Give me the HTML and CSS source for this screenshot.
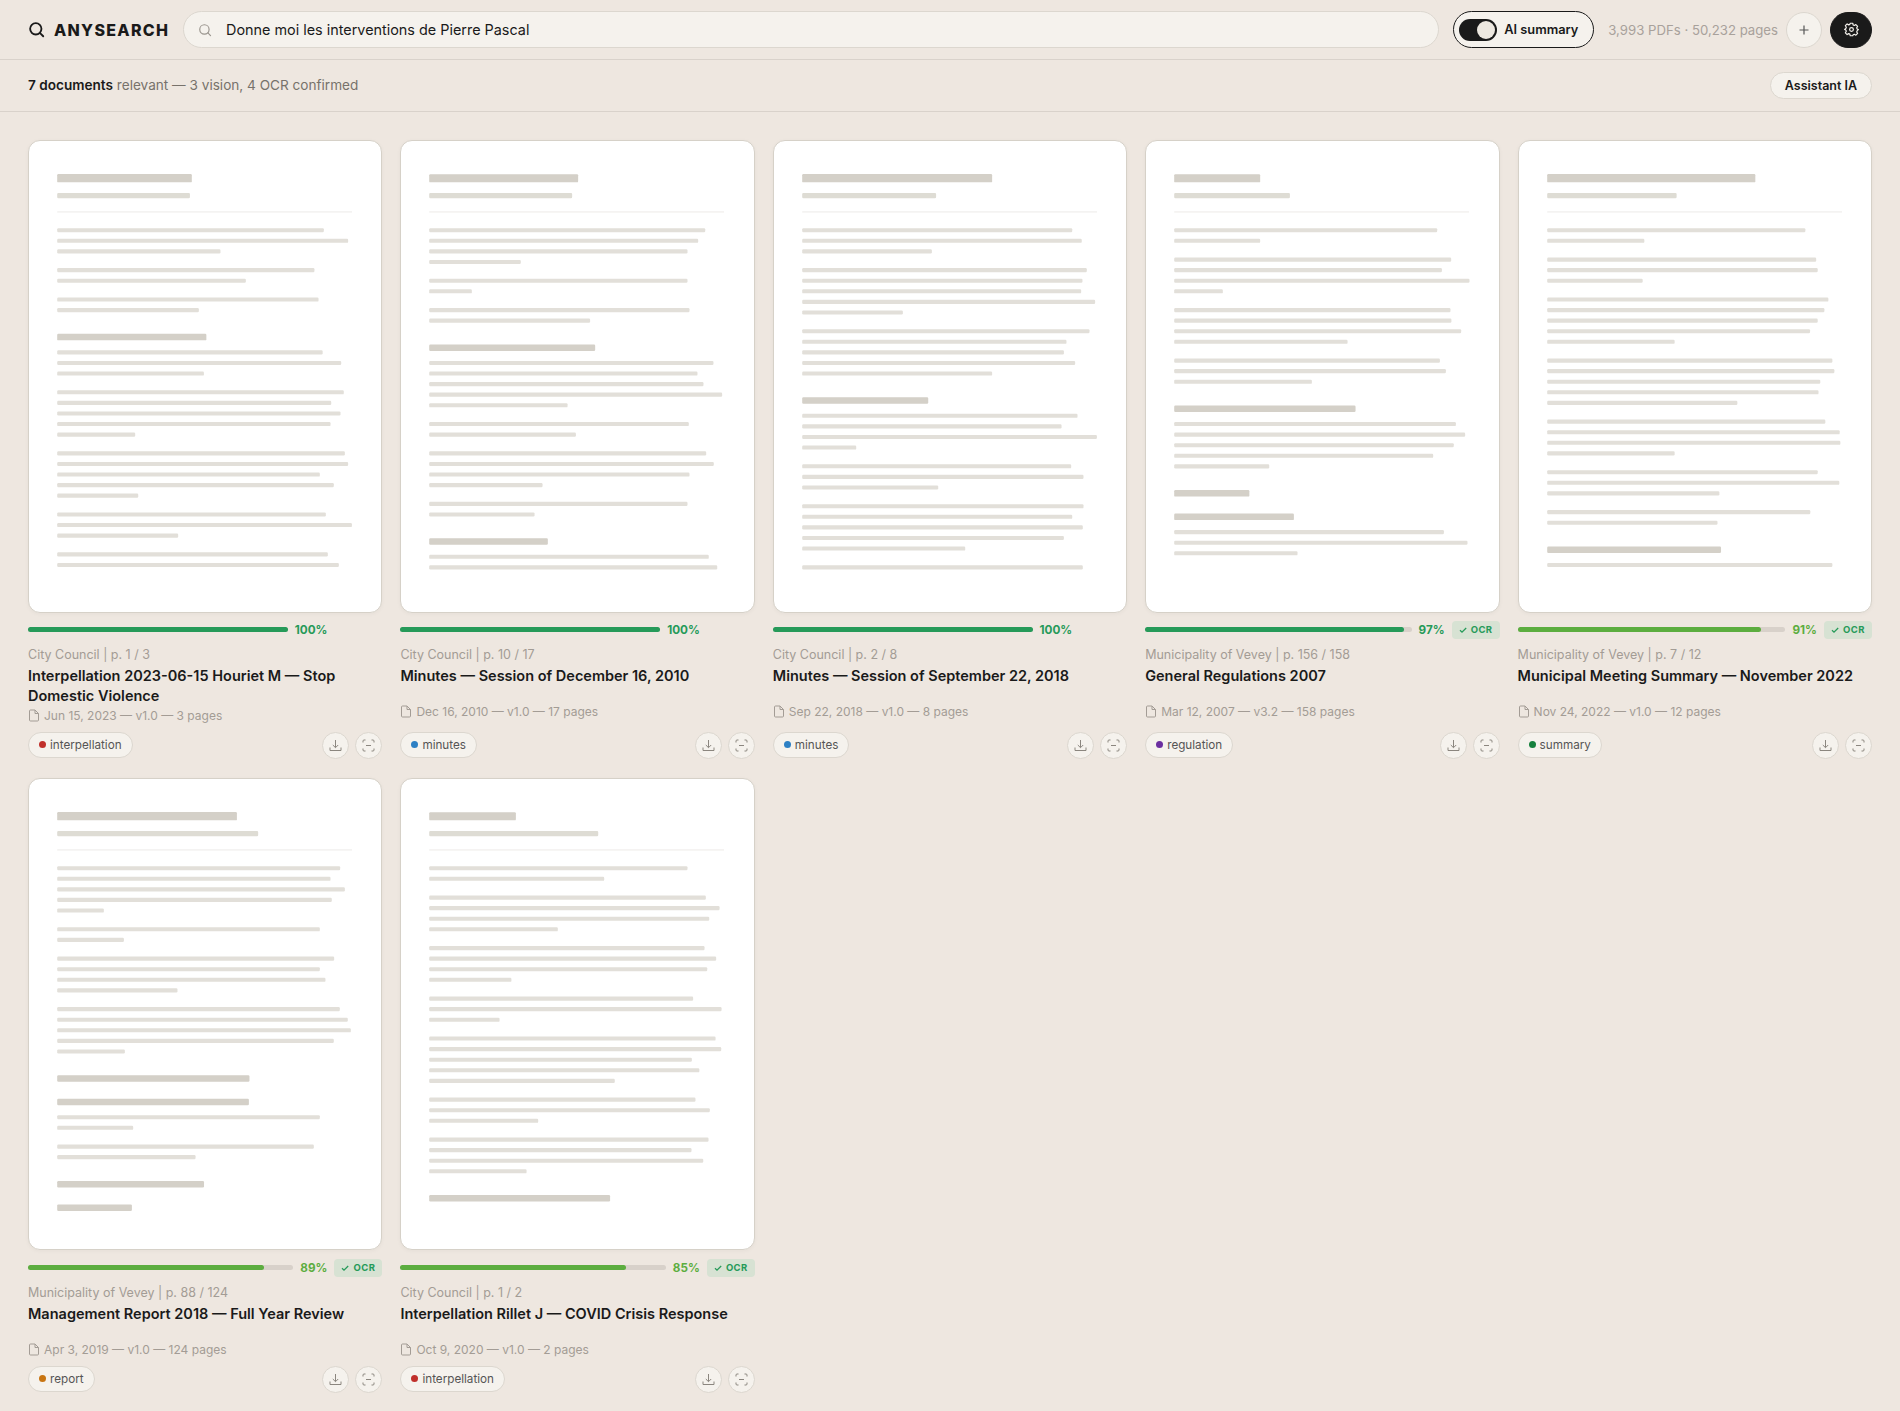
FILE: index.html
```html
<!DOCTYPE html>
<html lang="fr">
<head>
    <meta charset="UTF-8">
    <meta name="viewport" content="width=device-width, initial-scale=1.0">
    <title>AnySearch</title>
    <link rel="stylesheet" href="styles.css">
</head>
<body>

    <!-- Top bar -->
    <header class="topbar">
        <div class="logo">
            <svg width="17" height="17" viewBox="0 0 24 24" fill="none" stroke="currentColor" stroke-width="2.6" stroke-linecap="round"><circle cx="11" cy="11" r="8"/><path d="M17 17l4.5 4.5"/></svg>
            <span class="logo-text">ANYSEARCH</span>
        </div>
        <div class="search">
            <svg width="14" height="14" viewBox="0 0 24 24" fill="none" stroke="currentColor" stroke-width="2" stroke-linecap="round"><circle cx="11" cy="11" r="8"/><path d="M17 17l4.5 4.5"/></svg>
            <input type="text" class="search-input" value="Donne moi les interventions de Pierre Pascal">
        </div>
        <button type="button" class="ai-toggle"><span class="switch"></span>AI summary</button>
        <div class="topbar-end">
            <span class="stats">3,993 PDFs · 50,232 pages</span>
            <button type="button" class="add-btn">
                <svg width="12" height="12" viewBox="0 0 12 12" fill="none" stroke="currentColor" stroke-width="1.2"><path d="M6 1.5v9M1.5 6h9"/></svg>
            </button>
            <button type="button" class="settings-btn">
                <svg width="15" height="15" viewBox="0 0 24 24" fill="none" stroke="currentColor" stroke-width="1.9" stroke-linejoin="round"><circle cx="12" cy="12" r="3"/><path d="M10 2h4l.7 2.8 1.8.8 2.5-1.5 2.8 2.8-1.5 2.5.8 1.9L23 12l-1.900 1.900-.8 1.900 1.500 2.500-2.800 2.800-2.500-1.500-1.800.8L14 22h-4l-.7-2.600-1.800-.8L5 20.100l-2.800-2.800 1.500-2.500-.8-1.900L1 12l1.900-1.700.8-1.900-1.500-2.500L5 3.100l2.500 1.500 1.800-.8z"/></svg>
            </button>
        </div>
    </header>

    <!-- Results summary -->
    <div class="summary">
        <p class="summary-text"><strong>7 documents</strong> relevant — 3 vision, 4 OCR confirmed</p>
        <button type="button" class="assistant-btn">Assistant IA</button>
    </div>

    <main class="results" id="results"></main>

    <script src="script.js"></script>
</body>
</html>
```

FILE: styles.css
```css
* {
    box-sizing: border-box;
}

body {
    margin: 0;
    background-color: #eee7e0;
    color: #1a1a1a;
    font-family: Inter, "Liberation Sans", sans-serif;
    font-size: 13px;
}

button {
    padding: 0;
    font-family: inherit;
    color: inherit;
    cursor: pointer;
}

svg {
    display: block;
    flex: none;
}

/* Top bar */
.topbar {
    display: flex;
    align-items: center;
    gap: 14px;
    height: 60px;
    padding: 0 28px;
    border-bottom: 1px solid #d9d2cb;
}

.logo {
    display: flex;
    align-items: center;
    gap: 9px;
    width: 141px;
}

.logo-text {
    font-size: 16px;
    font-weight: 800;
    letter-spacing: 1.28px;
}

.search {
    display: flex;
    flex: 1;
    align-items: center;
    gap: 14px;
    height: 37px;
    padding: 0 14px;
    border: 1px solid #dcd7cf;
    border-radius: 19px;
    background-color: #f5f2ed;
    color: #9a958e;
}

.search-input {
    flex: 1;
    padding: 0;
    border: none;
    outline: none;
    background: none;
    font-family: inherit;
    font-size: 14.4px;
    color: #1a1a1a;
}

.ai-toggle {
    display: flex;
    align-items: center;
    gap: 7px;
    width: 141px;
    height: 37px;
    padding: 0 5px;
    border: 1.5px solid #1a1a1a;
    border-radius: 19px;
    background-color: #f5f2ed;
    font-size: 12.8px;
    font-weight: 600;
    white-space: nowrap;
}

.switch {
    display: flex;
    justify-content: flex-end;
    width: 38px;
    height: 22px;
    padding: 2px;
    border-radius: 11px;
    background-color: #1a1a1a;
}

.switch::after {
    content: "";
    width: 18px;
    height: 18px;
    border-radius: 50%;
    background-color: #ede8e0;
}

.topbar-end {
    display: flex;
    align-items: center;
    gap: 8px;
}

.stats {
    font-size: 13.2px;
    color: #a8a19b;
    white-space: nowrap;
}

.add-btn, .settings-btn {
    display: flex;
    align-items: center;
    justify-content: center;
    width: 36px;
    height: 36px;
    border: 1px solid #dcd7cf;
    border-radius: 18px;
    background-color: #f5f2ed;
    color: #555;
}

.settings-btn {
    width: 42px;
    border-color: #1a1a1a;
    background-color: #1a1a1a;
    color: #f5f2ed;
}

/* Results summary */
.summary {
    display: flex;
    align-items: center;
    justify-content: space-between;
    height: 52px;
    padding: 0 28px;
    border-bottom: 1px solid #d9d2cb;
}

.summary-text {
    margin: 0;
    padding-bottom: 1px;
    font-size: 13.6px;
    color: #77726b;
}

.summary-text strong {
    font-weight: 600;
    color: #1a1a1a;
}

.assistant-btn {
    width: 102px;
    height: 27px;
    border: 1px solid #dcd7cf;
    border-radius: 14px;
    background-color: #f5f2ed;
    font-size: 12.5px;
    font-weight: 600;
}

/* Document grid */
.results {
    display: grid;
    grid-template-columns: repeat(5, 1fr);
    gap: 19px 18px;
    padding: 28px;
}

.card {
    display: flex;
    flex-direction: column;
}

.thumb {
    aspect-ratio: 3 / 4;
    border: 1px solid #d6d1c8;
    border-radius: 12px;
    background-color: #fff;
    box-shadow: 0 1px 4px rgba(0, 0, 0, 0.04);
    overflow: hidden;
}

.thumb svg {
    width: 100%;
}

.bar-title, .bar-heading {
    fill: #d4d0c8;
}

.bar-subtitle {
    fill: #dedcd4;
}

.bar-rule {
    fill: #ebe9e6;
}

.bar-line {
    fill: #e2dfd9;
}

/* Relevance score */
.score {
    display: flex;
    align-items: center;
    gap: 7px;
    height: 18px;
    margin-top: 8.4px;
}

.track {
    flex: 1;
    height: 5px;
    border-radius: 3px;
    background-color: #d8d1ca;
}

.fill {
    height: 100%;
    border-radius: 3px;
}

.score-value {
    font-size: 11.7px;
    font-weight: 700;
}

.high .fill {
    background-color: #269a59;
}

.high .score-value {
    color: #269a59;
}

.good .fill {
    background-color: #5cad3f;
}

.good .score-value {
    color: #5cad3f;
}

.ocr {
    display: flex;
    align-items: center;
    justify-content: center;
    gap: 4px;
    width: 48px;
    height: 18px;
    border-radius: 4px;
    background-color: #d7e2d3;
    color: #269a59;
    font-size: 9.5px;
    font-weight: 700;
    letter-spacing: 0.4px;
}

.ocr.empty {
    visibility: hidden;
}

/* Card text */
.source {
    margin-top: 7px;
    font-size: 12.5px;
    line-height: 18px;
    color: #a39c95;
}

.title {
    min-height: 36px;
    margin: 2px 0 0;
    font-size: 14.5px;
    font-weight: 600;
    line-height: 20px;
}

.meta {
    display: flex;
    align-items: center;
    gap: 4px;
    font-size: 12px;
    line-height: 20px;
    color: #a39c95;
}

.card-footer {
    display: flex;
    align-items: flex-start;
    gap: 6px;
    margin-top: auto;
    padding-top: 6px;
}

.tag {
    display: flex;
    align-items: center;
    gap: 4px;
    height: 26px;
    margin-right: auto;
    padding: 0 10px;
    border: 1px solid #dcd7cf;
    border-radius: 13px;
    background-color: #f5f2ed;
    font-size: 11.7px;
    color: #555;
}

.dot {
    width: 7px;
    height: 7px;
    border-radius: 50%;
}

.interpellation .dot {
    background-color: #c0302b;
}

.minutes .dot {
    background-color: #2d80c4;
}

.regulation .dot {
    background-color: #6b2fa0;
}

.summary-doc .dot {
    background-color: #15803d;
}

.report .dot {
    background-color: #c87512;
}

.icon-btn {
    display: flex;
    align-items: center;
    justify-content: center;
    width: 27px;
    height: 27px;
    border: 1px solid #dcd7cf;
    border-radius: 50%;
    background-color: #f5f2ed;
    color: #8b867f;
}
```

FILE: script.js
```js
// Each paragraph is a list of line widths, { h: width } is a section heading
const documents = [
    {
        source: 'City Council | p. 1 / 3', title: 'Interpellation 2023-06-15 Houriet M — Stop Domestic Violence',
        meta: 'Jun 15, 2023 — v1.0 — 3 pages', tag: 'interpellation', score: 100, ocr: false,
        page: [114.6, 113, [227, 247.7, 139], [219, 160.6], [222.5, 120.6], { h: 127 }, [226, 241.8, 124.9],
            [244, 233.3, 241.2, 232.7, 66.4], [244.9, 247.7, 223.6, 235.5, 69], [228.7, 250.9, 103], [230.4, 239.8]]
    },
    {
        source: 'City Council | p. 10 / 17', title: 'Minutes — Session of December 16, 2010',
        meta: 'Dec 16, 2010 — v1.0 — 17 pages', tag: 'minutes', score: 100, ocr: false,
        page: [126.8, 121.7, [235, 229, 219.9, 78], [219.9, 36.3], [221.6, 137], { h: 141.3 },
            [242, 228.4, 233.5, 249.4, 117.8], [221, 124.9], [235.8, 242.3, 221.6, 96.5], [219.9, 89.7],
            { h: 101 }, [238, 245.2]]
    },
    {
        source: 'City Council | p. 2 / 8', title: 'Minutes — Session of September 22, 2018',
        meta: 'Sep 22, 2018 — v1.0 — 8 pages', tag: 'minutes', score: 100, ocr: false,
        page: [161.7, 114, [229.9, 238, 110.4], [242.3, 238.6, 237.5, 249.4, 85.7], [244.6, 225, 222.8, 232.4, 161.7],
            { h: 107.3 }, [234.4, 220.8, 250.9, 46], [229, 239.5, 115.8], [239.5, 229.9, 238.9, 222.8, 138.8], [238.9]]
    },
    {
        source: 'Municipality of Vevey | p. 156 / 158', title: 'General Regulations 2007',
        meta: 'Mar 12, 2007 — v3.2 — 158 pages', tag: 'regulation', score: 97, ocr: true,
        page: [73.2, 98.5, [223.9, 73.2], [235.8, 227.9, 251.4, 41.4], [235.2, 236, 244.3, 147.6], [226.2, 231.3, 117.2],
            { h: 154.4 }, [239.8, 247.7, 238, 220.5, 80.9], { h: 64 }, { h: 101.9 }, [229.6, 249.7, 105]]
    },
    {
        source: 'Municipality of Vevey | p. 7 / 12', title: 'Municipal Meeting Summary — November 2022',
        meta: 'Nov 24, 2022 — v1.0 — 12 pages', tag: 'summary', score: 91, ocr: true,
        page: [177.2, 110.2, [219.8, 82.7], [229, 230.3, 81.3], [239.4, 236, 230.3, 223.8, 108.5],
            [242.8, 244.5, 232.5, 231, 161.9], [236.8, 249, 249.6, 108.5], [230.3, 248.7, 146.6], [224, 145],
            { h: 148 }, [242.8]]
    },
    {
        source: 'Municipality of Vevey | p. 88 / 124', title: 'Management Report 2018 — Full Year Review',
        meta: 'Apr 3, 2019 — v1.0 — 124 pages', tag: 'report', score: 89, ocr: true,
        page: [153, 171.1, [240.9, 232.7, 244.9, 233.8, 39.7], [223.6, 56.8], [235.8, 223.6, 228.4, 102.4],
            [240.6, 247.4, 250, 235.5, 57.6], { h: 163.7 }, { h: 163.2 }, [223.6, 64.7], [218.5, 117.8],
            { h: 125 }, { h: 63.6 }]
    },
    {
        source: 'City Council | p. 1 / 2', title: 'Interpellation Rillet J — COVID Crisis Response',
        meta: 'Oct 9, 2020 — v1.0 — 2 pages', tag: 'interpellation', score: 85, ocr: true,
        page: [73.8, 143.9, [219.9, 149], [235.5, 247.2, 238.4, 109.5], [234.4, 244.3, 236.7, 70], [224.7, 248.9, 59.9],
            [243.8, 248.6, 223.6, 230, 158], [226.7, 238.9, 92.8], [237.8, 223.3, 233.3, 82.9], { h: 154 }]
    }
];

function bar(type, y, width, height) {
    return `<rect class="bar-${type}" x="24" y="${y}" width="${width}" height="${height}" rx="${height > 1 ? 1 : 0}"/>`;
}

// Draws the page preview
function drawPage(page) {
    const [title, subtitle, ...blocks] = page;
    let out = bar('title', 28.2, title, 7) + bar('subtitle', 44.2, subtitle, 4.5) + bar('rule', 60, 251, 0.8);
    let y = 74.2;
    blocks.forEach(block => {
        if (block.h) {
            y += 6;
            out += bar('heading', y, block.h, 5.5);
            y += 14;
        } else {
            block.forEach(width => {
                out += bar('line', y, width, 3.5);
                y += 9;
            });
            // space between paragraphs, a heading already brings its own
            y += 7;
        }
    });
    return `<svg viewBox="0 0 300 400">${out}</svg>`;
}

function drawCard(doc) {
    const level = doc.score > 95 ? 'high' : 'good';
    const tagClass = doc.tag === 'summary' ? 'summary-doc' : doc.tag;
    return `
        <article class="card">
            <div class="thumb">${drawPage(doc.page)}</div>
            <div class="score ${level}">
                <div class="track"><div class="fill" style="width: ${doc.score}%"></div></div>
                <span class="score-value">${doc.score}%</span>
                <span class="ocr ${doc.ocr ? '' : 'empty'}">
                    <svg width="8" height="8" viewBox="0 0 8 8" fill="none" stroke="currentColor" stroke-width="1.3"><path d="M1 4.300l2 1.900L7.200 2"/></svg>OCR
                </span>
            </div>
            <div class="source">${doc.source}</div>
            <h2 class="title">${doc.title}</h2>
            <div class="meta">
                <svg width="12" height="13" viewBox="0 0 12 13" fill="none" stroke="currentColor" stroke-linejoin="round"><path d="M7 1H2.500a1 1 0 0 0-1 1v9a1 1 0 0 0 1 1h7a1 1 0 0 0 1-1V4.500zM7 1v3.500h3.500"/></svg>
                ${doc.meta}
            </div>
            <div class="card-footer">
                <span class="tag ${tagClass}"><span class="dot"></span>${doc.tag}</span>
                <button type="button" class="icon-btn">
                    <svg width="13" height="13" viewBox="0 0 13 13" fill="none" stroke="currentColor"><path d="M6.500 1v7.500M3.800 6l2.700 2.700L9.200 6M1 8.500v3h11v-3"/></svg>
                </button>
                <button type="button" class="icon-btn">
                    <svg width="13" height="13" viewBox="0 0 13 13" fill="none" stroke="currentColor"><path d="M1 3.500V2a1 1 0 0 1 1-1h1.500M9.500 1H11a1 1 0 0 1 1 1v1.500M12 9.500V11a1 1 0 0 1-1 1H9.500M3.500 12H2a1 1 0 0 1-1-1V9.500M4 6.500h5"/></svg>
                </button>
            </div>
        </article>
    `;
}

document.getElementById('results').innerHTML = documents.map(drawCard).join('');
```
